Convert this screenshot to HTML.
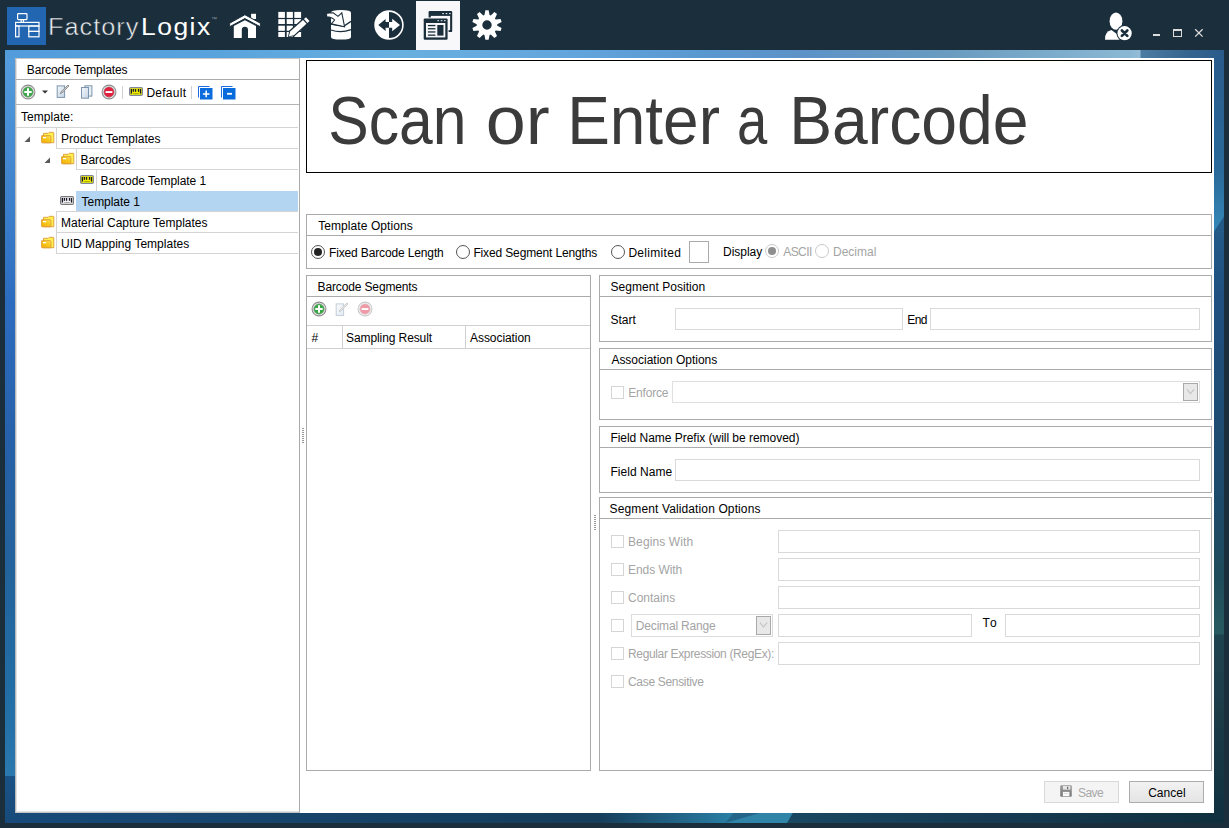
<!DOCTYPE html>
<html><head><meta charset="utf-8">
<style>
*{box-sizing:border-box;margin:0;padding:0}
html,body{width:1229px;height:828px;overflow:hidden;background:#1b2e3c}
body{position:relative;font-family:"Liberation Sans",sans-serif;font-size:12px;color:#000}
.a{position:absolute}
.t{position:absolute;white-space:nowrap;line-height:14px;font-size:12px}
.g{color:#a4a4a4}
.frame{left:5px;top:50px;width:1219px;height:773px;overflow:hidden;
 background:linear-gradient(180deg,#5a9edb 0%,#3b82c4 25%,#2266aa 55%,#2472aa 80%,#1c5a8c 100%)}
.white{left:15px;top:58px;width:1199px;height:755px;background:#fff}
.box{position:absolute;border:1px solid #ababab;background:#fff}
.hd{position:absolute;left:0;right:0;top:0;height:21px;border-bottom:1px solid #ababab}
.tb{position:absolute;border:1px solid #d9d9d9;background:#fff}
.cb{position:absolute;width:13px;height:13px;border:1px solid #d5d5d5;background:#fff}
.rad{position:absolute;width:14px;height:14px;border-radius:50%;border:1px solid #333;background:#fff}
</style></head>
<body>
<!-- frame gradient -->
<div class="a" style="left:5px;top:50px;width:1219px;height:773px;background:#1e5a8c"></div>
<div class="a" style="left:5px;top:50px;width:1219px;height:8px;background:linear-gradient(90deg,#529cdc 0%,#58a2dd 16%,#68b0e0 32.4%,#62a4dc 47%,#5a98d0 57%,#5c92c8 65.2%,#6a9cc0 77.5%,#8ab8d4 92.3%,#94bcd8 93.1%,#4c7ca2 93.2%,#36668f 97%,#2a5a8a 100%)"></div>
<div class="a" style="left:5px;top:58px;width:10px;height:765px;background:linear-gradient(180deg,#559ddd 0%,#2c6cc0 32%,#2660a8 51%,#23639c 67%,#226ea6 84%,#2978ae 93.8%,#1a5285 93.9%,#174a7a 100%)"></div>
<div class="a" style="left:1214px;top:58px;width:10px;height:765px;background:linear-gradient(180deg,#2a5c8c 0%,#2a6a9a 15%,#3488b8 22.6%,#235a88 22.7%,#1f5080 31%,#1e4a68 60%,#1f4c5a 68%,#285a60 75.3%,#1f4450 75.4%,#1c3c48 85%,#10303f 100%)"></div>
<svg class="a" style="left:1214px;top:216px" width="10" height="16" viewBox="0 0 10 16"><path d="M10 0.5 L10 15.6 L0 15.6Z" fill="#235a88"/></svg>
<div class="a" style="left:15px;top:813px;width:1199px;height:10px;background:linear-gradient(90deg,#174a7a 0%,#163d5a 48.5%,#2a80a6 60%,#1a4a66 60.1%,#173c54 80%,#10303f 100%)"></div>
<svg class="a" style="left:680px;top:813px" width="140" height="10" viewBox="0 0 140 10">
  <path d="M53.5 0 L112.8 0 L107 10 L45 10Z" fill="#2f84a8"/>
  <path d="M53.5 0 L79.7 0 L45 10Z" fill="#236689"/>
</svg>
<div class="a white"></div>

<!-- ===== HEADER ===== -->
<div class="a" style="left:7px;top:7px;width:39px;height:38px;background:#2265b0"></div>
<svg class="a" style="left:7px;top:7px" width="39" height="38" viewBox="0 0 39 38">
  <g fill="none" stroke="#fff" stroke-width="1.2">
    <rect x="10.6" y="6.6" width="9.4" height="6" rx="0.8"/>
    <rect x="8.6" y="15.4" width="23.4" height="3.6"/>
    <rect x="8.6" y="19" width="3.4" height="10.8"/>
    <rect x="21.8" y="19" width="10.2" height="5.4"/>
    <rect x="21.8" y="24.4" width="10.2" height="5.4"/>
    <path d="M14.2 12.6v2.8M16.4 12.6v2.8"/>
  </g>
</svg>
<div class="a" style="left:48.4px;top:13px;font-size:23px;line-height:28px;white-space:nowrap;color:#eceef0;letter-spacing:0.9px;transform:scaleX(1.1);transform-origin:0 0;-webkit-text-stroke:0.5px #1b2e3c">Factory</div>
<div class="a" style="left:140.7px;top:13px;font-size:23px;line-height:28px;white-space:nowrap;color:#fff;letter-spacing:1.3px;transform:scaleX(1.15);transform-origin:0 0">Logix</div>
<div class="a" style="left:211px;top:16px;font-size:6px;line-height:6px;white-space:nowrap;color:#8a9aa6">™</div>


<!-- nav icons -->
<svg class="a" style="left:228px;top:10px" width="34" height="30" viewBox="0 0 34 30">
  <path fill="#fff" d="M23.1 3.8 L28 3.8 L28 9 L23.1 9Z"/>
  <path fill="#fff" stroke="#1b2e3c" stroke-width="1" d="M1.6 13.2 L16.9 4.7 L32.4 13.2 L32.4 16.8 L16.9 8.6 L1.6 16.8Z"/>
  <path fill="#fff" d="M5.8 16.1 L16.9 10.3 L28 16.1 L28 28 L20 28 L20 19.8 A3.1 3.1 0 0 0 13.8 19.8 L13.8 28 L5.8 28Z"/>
</svg>
<svg class="a" style="left:276px;top:10px" width="34" height="30" viewBox="0 0 34 30">
  <g fill="#fff"><rect x="2.3" y="1.9" width="6.6" height="6.0"/><rect x="2.3" y="9.1" width="6.6" height="4.9"/><rect x="2.3" y="15.7" width="6.6" height="5.1"/><rect x="2.3" y="22" width="6.6" height="5.0"/><rect x="10.7" y="1.9" width="6.2" height="6.0"/><rect x="10.7" y="9.1" width="6.2" height="4.9"/><rect x="10.7" y="15.7" width="6.2" height="5.1"/><rect x="10.7" y="22" width="6.2" height="5.0"/><rect x="18.3" y="1.9" width="6.8" height="6.0"/><rect x="18.3" y="9.1" width="6.8" height="4.9"/><rect x="18.3" y="15.7" width="6.8" height="5.1"/><rect x="18.3" y="22" width="6.8" height="5.0"/></g>
  <path fill="#1b2e3c" d="M11.91 27.10 L18.52 26.37 L35.25 11.23 L30.02 5.46 L13.30 20.60Z"/>
  <path fill="#fff" d="M12.80 26.30 L17.87 25.21 L30.53 13.75 L27.04 9.90 L14.39 21.36Z"/>
  <path fill="#fff" d="M31.41 12.95 L33.49 11.07 L30.00 7.22 L27.93 9.10Z"/>
</svg>
<svg class="a" style="left:322px;top:6px" width="34" height="36" viewBox="0 0 34 36">
  <path fill="#fff" d="M9 6.6 Q9 4 19 4 Q29 4 29 6.6 L29 31 Q29 33.6 19 33.6 Q9 33.6 9 31Z"/>
  <g fill="none" stroke="#1b2e3c" stroke-width="1.3">
    <path d="M9 18.2 Q16 19.6 22 20 L29 15.4"/>
    <path d="M9 24 Q19 27.6 29 23.6"/>
  </g>
  <path fill="#fff" stroke="#1b2e3c" stroke-width="1.1" stroke-linejoin="miter" d="M4.6 7.2 L11.2 6.8 L16 10.4 L19.8 6.8 L22.6 20.8 L9.2 17.8 L12.6 14 Q10 11.2 4.6 10.8Z"/>
</svg>
<svg class="a" style="left:373px;top:9px" width="33" height="32" viewBox="0 0 33 32">
  <circle cx="16" cy="16" r="14.7" fill="#fff"/>
  <path fill="#1b2e3c" d="M16 2.9 A13.1 13.1 0 0 1 16 29.1Z"/>
  <path fill="#1b2e3c" d="M5.3 16 L12.6 10.1 L12.6 13.1 L16 13.1 L16 18.8 L12.6 18.8 L12.6 21.9Z"/>
  <path fill="#fff" d="M27 16 L19.2 9.8 L19.2 13.1 L16 13.1 L16 18.8 L19.2 18.8 L19.2 22.2Z"/>
</svg>
<div class="a" style="left:416px;top:1px;width:44px;height:49px;background:#f8f8fa"></div>
<svg class="a" style="left:422px;top:10px" width="34" height="32" viewBox="0 0 34 32">
  <rect x="6.6" y="1" width="23.6" height="21.1" rx="1.2" fill="#1b2e3c"/>
  <rect x="8.8" y="5.9" width="19.3" height="14.2" fill="#f8f8fa"/>
  <g fill="#f8f8fa"><rect x="20.3" y="3.1" width="1.6" height="1"/><rect x="23.7" y="3.1" width="1.6" height="1"/><rect x="27" y="3.1" width="1.6" height="1"/></g>
  <rect x="0.7" y="7.4" width="25.9" height="23.3" rx="1.5" fill="#f8f8fa"/>
  <rect x="1.7" y="8.4" width="23.9" height="21.3" rx="1.2" fill="#1b2e3c"/>
  <rect x="4" y="13" width="19.3" height="14.4" fill="#f8f8fa"/>
  <g fill="#f8f8fa"><rect x="15.4" y="10.2" width="1.6" height="1"/><rect x="18.8" y="10.2" width="1.6" height="1"/><rect x="22" y="10.2" width="1.6" height="1"/></g>
  <g fill="#1b2e3c">
    <rect x="5.9" y="14.9" width="7.5" height="1.3"/><rect x="5.9" y="18.1" width="7.5" height="1.3"/>
    <rect x="5.9" y="21.3" width="7.5" height="1.3"/><rect x="5.9" y="24.5" width="7.5" height="1.3"/>
    <rect x="15.3" y="15" width="6.2" height="10.6"/>
  </g>
</svg>
<svg class="a" style="left:471px;top:9px" width="32" height="32" viewBox="0 0 32 32">
  <path fill="#fff" fill-rule="evenodd" d="M13.42 6.03 L14.39 1.19 L17.61 1.19 L18.58 6.03 L19.77 6.42 L23.40 3.07 L26.01 4.96 L23.95 9.45 L24.69 10.47 L29.59 9.89 L30.59 12.95 L26.28 15.37 L26.28 16.63 L30.59 19.05 L29.59 22.11 L24.69 21.53 L23.95 22.55 L26.01 27.04 L23.40 28.93 L19.77 25.58 L18.58 25.97 L17.61 30.81 L14.39 30.81 L13.42 25.97 L12.23 25.58 L8.60 28.93 L5.99 27.04 L8.05 22.55 L7.31 21.53 L2.41 22.11 L1.41 19.05 L5.72 16.63 L5.72 15.37 L1.41 12.95 L2.41 9.89 L7.31 10.47 L8.05 9.45 L5.99 4.96 L8.60 3.07 L12.23 6.42Z M20.7 16 A4.7 4.7 0 1 0 11.3 16 A4.7 4.7 0 1 0 20.7 16Z"/>
</svg>
<!-- user icon -->
<svg class="a" style="left:1102px;top:11px" width="32" height="31" viewBox="0 0 32 31">
  <path fill="#fff" d="M3 28.7 Q2.6 20.6 9.4 19 L15.6 23.6 L17.6 28.7Z"/>
  <ellipse cx="14" cy="10.15" rx="6.4" ry="8.6" fill="#fff"/>
  <circle cx="22.6" cy="22.2" r="8.2" fill="#1b2e3c"/>
  <circle cx="22.6" cy="22.2" r="7.1" fill="#fff"/>
  <path d="M19.9 19.5 L25.3 24.9 M25.3 19.5 L19.9 24.9" stroke="#1b2e3c" stroke-width="2.7" stroke-linecap="round"/>
</svg>
<!-- window controls -->
<div class="a" style="left:1153px;top:34px;width:7px;height:2px;background:#dcdcdc"></div>
<div class="a" style="left:1173px;top:29px;width:9px;height:8px;border:1px solid #dcdcdc;border-top-width:2px"></div>
<svg class="a" style="left:1194px;top:28px" width="10" height="10" viewBox="0 0 10 10"><path d="M1.2 1.2L8.6 8.6M8.6 1.2L1.2 8.6" stroke="#dcdcdc" stroke-width="1.3"/></svg>


<!-- ===== LEFT PANEL ===== -->
<div class="a" style="left:15px;top:58px;width:285px;height:755px;border-left:1px solid #b9b9b9;border-right:1px solid #ababab;border-bottom:1px solid #c4c4c4;border-top:1px solid #c8c8c8;background:#fff;box-shadow:inset 1px 0 0 #e2e2e2, inset 0 -1px 0 #e2e2e2"></div>
<div class="a" style="left:16px;top:79px;width:283px;height:1px;background:#ababab"></div>
<div class="t" style="left:26.80px;top:63.00px;letter-spacing:-0.11px">Barcode Templates</div>
<!-- toolbar -->
<svg class="a" style="left:20px;top:84px" width="16" height="16" viewBox="0 0 16 16">
  <circle cx="8" cy="8" r="6.9" fill="#f6f6f6" stroke="#8c8c8c" stroke-width="1.1"/>
  <circle cx="8" cy="8" r="5.3" fill="#3aa846" stroke="#a0a0a0" stroke-width="0.7"/>
  <path d="M8 4.3v7.4M4.3 8h7.4" stroke="#fff" stroke-width="2"/>
</svg>
<svg class="a" style="left:41px;top:90px" width="8" height="4" viewBox="0 0 8 4"><path d="M1 0.5h6L4 3.5z" fill="#333"/></svg>
<svg class="a" style="left:56px;top:84px" width="14" height="15" viewBox="0 0 14 15">
  <defs><linearGradient id="dg" x1="0" y1="0" x2="1" y2="1"><stop offset="0" stop-color="#f4f8fc"/><stop offset="1" stop-color="#c4d4e4"/></linearGradient></defs>
  <rect x="1.2" y="1.9" width="7.4" height="11.5" fill="url(#dg)" stroke="#7c94ac" stroke-width="1"/>
  <path d="M4.2 9.8 L5 7.8 L12 1 L13 2 L6 8.9Z" fill="#d0d0d0" stroke="#808080" stroke-width="0.8"/>
</svg>
<svg class="a" style="left:80px;top:84px" width="13" height="15" viewBox="0 0 13 15">
  <rect x="4.9" y="1.8" width="7" height="10.3" fill="#e8f0f6" stroke="#7c94ac" stroke-width="1"/>
  <rect x="1.5" y="3.5" width="7" height="10.7" fill="url(#dg)" stroke="#7c94ac" stroke-width="1"/>
</svg>
<svg class="a" style="left:101px;top:84px" width="16" height="16" viewBox="0 0 16 16">
  <circle cx="8" cy="8" r="6.9" fill="#f6f6f6" stroke="#8c8c8c" stroke-width="1.1"/>
  <circle cx="8" cy="8" r="5.3" fill="#e0203e" stroke="#a0a0a0" stroke-width="0.7"/>
  <rect x="4.6" y="7.1" width="6.8" height="1.9" fill="#fff"/>
</svg>
<div class="a" style="left:122px;top:86px;width:1px;height:13px;background:#d0d0d0"></div>
<svg class="a" style="left:129px;top:87px" width="14" height="9" viewBox="0 0 14 9">
  <rect x="0.6" y="0.6" width="12.8" height="7.8" rx="1.2" fill="#f2f000" stroke="#80869c" stroke-width="1.2"/>
  <g fill="#1a1a28"><rect x="1.75" y="2" width="1.3" height="4.6"/><rect x="3.75" y="2" width="1.3" height="2.8"/><rect x="5.9" y="2" width="1.3" height="2.8"/><rect x="8.85" y="2" width="1.3" height="2.8"/><rect x="10.85" y="2" width="1.3" height="4.6"/></g>
  <rect x="4.3" y="6" width="5.4" height="0.9" fill="#a8a800"/>
</svg>
<div class="t" style="left:146.40px;top:86.00px;letter-spacing:0.27px">Default</div>
<div class="a" style="left:191px;top:86px;width:1px;height:13px;background:#d0d0d0"></div>
<svg class="a" style="left:198px;top:86px" width="15" height="14" viewBox="0 0 15 14">
  <path d="M0.5 11.5 V0.5 H11.5" fill="none" stroke="#1a6fe0" stroke-width="1"/>
  <rect x="2" y="2" width="12.5" height="11.5" fill="#0a6cdc"/>
  <path d="M8.2 4.6v6.6M4.9 7.9h6.6" stroke="#fff" stroke-width="1.5"/>
</svg>
<svg class="a" style="left:221px;top:86px" width="15" height="14" viewBox="0 0 15 14">
  <path d="M0.5 11.5 V0.5 H11.5" fill="none" stroke="#1a6fe0" stroke-width="1"/>
  <rect x="2" y="2" width="12.5" height="11.5" fill="#0a6cdc"/>
  <rect x="6" y="6.9" width="5" height="1.8" fill="#fff"/>
</svg>
<div class="a" style="left:16px;top:104px;width:283px;height:1px;background:#b4b4b4"></div>
<div class="t" style="left:21.00px;top:110.00px;letter-spacing:0.04px">Template:</div>
<div class="a" style="left:16px;top:127px;width:282px;height:1px;background:#d4d4d4"></div>
<!-- tree -->
<div class="a" style="left:56px;top:128px;width:242px;height:21px;border-left:1px solid #d4d4d4;border-bottom:1px solid #d4d4d4"></div>
<svg class="a" style="left:24px;top:136px" width="7" height="7" viewBox="0 0 7 7"><path d="M6 0.5 L6 6 L0.5 6Z" fill="#595959"/></svg><svg class="a" style="left:39px;top:130px" width="17" height="16" viewBox="0 0 17 16"><defs><linearGradient id="fold" x1="0" y1="1" x2="1" y2="0"><stop offset="0" stop-color="#f2b000"/><stop offset="0.6" stop-color="#f8c820"/><stop offset="1" stop-color="#ffe860"/></linearGradient></defs>
  <path d="M4.5 3.3 H9.2 L10.2 2.3 H14.1 Q14.8 2.3 14.8 3 V12.7 H4.5Z" fill="#fff04c" stroke="#dc9a3c" stroke-width="0.9"/>
  <path d="M2.6 5.7 H11.1 Q11.9 5.7 11.9 6.4 V12.8 H3.2 Q2.6 12.8 2.6 12.2Z" fill="url(#fold)" stroke="#dc9a3c" stroke-width="0.9"/>
  <rect x="4" y="7" width="3.2" height="1.3" fill="#fff"/>
</svg>
<div class="t" style="left:61.00px;top:132.00px;letter-spacing:0.02px">Product Templates</div>
<div class="a" style="left:76px;top:149px;width:222px;height:21px;border-left:1px solid #d4d4d4;border-bottom:1px solid #d4d4d4"></div>
<svg class="a" style="left:44px;top:157px" width="7" height="7" viewBox="0 0 7 7"><path d="M6 0.5 L6 6 L0.5 6Z" fill="#595959"/></svg><svg class="a" style="left:59px;top:151px" width="17" height="16" viewBox="0 0 17 16">
  <path d="M4.5 3.3 H9.2 L10.2 2.3 H14.1 Q14.8 2.3 14.8 3 V12.7 H4.5Z" fill="#fff04c" stroke="#dc9a3c" stroke-width="0.9"/>
  <path d="M2.6 5.7 H11.1 Q11.9 5.7 11.9 6.4 V12.8 H3.2 Q2.6 12.8 2.6 12.2Z" fill="url(#fold)" stroke="#dc9a3c" stroke-width="0.9"/>
  <rect x="4" y="7" width="3.2" height="1.3" fill="#fff"/>
</svg>
<div class="t" style="left:80.60px;top:153.00px;letter-spacing:-0.09px">Barcodes</div>
<div class="a" style="left:96px;top:170px;width:202px;height:21px;border-left:1px solid #d4d4d4"></div>
<svg class="a" style="left:80px;top:175px" width="14" height="9" viewBox="0 0 14 9">
  <rect x="0.6" y="0.6" width="12.8" height="7.8" rx="1.2" fill="#f2f000" stroke="#80869c" stroke-width="1.2"/>
  <g fill="#1a1a28"><rect x="1.75" y="2" width="1.3" height="4.6"/><rect x="3.75" y="2" width="1.3" height="2.8"/><rect x="5.9" y="2" width="1.3" height="2.8"/><rect x="8.85" y="2" width="1.3" height="2.8"/><rect x="10.85" y="2" width="1.3" height="4.6"/></g>
  <rect x="4.3" y="6" width="5.4" height="0.9" fill="#a8a800"/>
</svg>
<div class="t" style="left:100.60px;top:174.00px;letter-spacing:-0.06px">Barcode Template 1</div>
<div class="a" style="left:76px;top:191px;width:222px;height:20px;background:#b3d5f1"></div>
<svg class="a" style="left:60px;top:196px" width="14" height="9" viewBox="0 0 14 9">
  <rect x="0.6" y="0.6" width="12.8" height="7.8" rx="1.2" fill="#f2f2f2" stroke="#7a7a7a" stroke-width="1.2"/>
  <g fill="#1a1a28"><rect x="1.75" y="2" width="1.3" height="4.6"/><rect x="3.75" y="2" width="1.3" height="2.8"/><rect x="5.9" y="2" width="1.3" height="2.8"/><rect x="8.85" y="2" width="1.3" height="2.8"/><rect x="10.85" y="2" width="1.3" height="4.6"/></g>
  <rect x="4.3" y="6" width="5.4" height="0.9" fill="#a0a0a0"/>
</svg>
<div class="t" style="left:81.60px;top:195.00px;letter-spacing:-0.05px">Template 1</div>
<div class="a" style="left:56px;top:211px;width:242px;height:22px;border-left:1px solid #d4d4d4;border-bottom:1px solid #d4d4d4;border-top:1px solid #d4d4d4"></div>
<svg class="a" style="left:39px;top:214px" width="17" height="16" viewBox="0 0 17 16">
  <path d="M4.5 3.3 H9.2 L10.2 2.3 H14.1 Q14.8 2.3 14.8 3 V12.7 H4.5Z" fill="#fff04c" stroke="#dc9a3c" stroke-width="0.9"/>
  <path d="M2.6 5.7 H11.1 Q11.9 5.7 11.9 6.4 V12.8 H3.2 Q2.6 12.8 2.6 12.2Z" fill="url(#fold)" stroke="#dc9a3c" stroke-width="0.9"/>
  <rect x="4" y="7" width="3.2" height="1.3" fill="#fff"/>
</svg>
<div class="t" style="left:61.00px;top:216.00px;letter-spacing:0.00px">Material Capture Templates</div>
<div class="a" style="left:56px;top:233px;width:242px;height:21px;border-left:1px solid #d4d4d4;border-bottom:1px solid #d4d4d4"></div>
<svg class="a" style="left:39px;top:235px" width="17" height="16" viewBox="0 0 17 16">
  <path d="M4.5 3.3 H9.2 L10.2 2.3 H14.1 Q14.8 2.3 14.8 3 V12.7 H4.5Z" fill="#fff04c" stroke="#dc9a3c" stroke-width="0.9"/>
  <path d="M2.6 5.7 H11.1 Q11.9 5.7 11.9 6.4 V12.8 H3.2 Q2.6 12.8 2.6 12.2Z" fill="url(#fold)" stroke="#dc9a3c" stroke-width="0.9"/>
  <rect x="4" y="7" width="3.2" height="1.3" fill="#fff"/>
</svg>
<div class="t" style="left:61.00px;top:237.00px;letter-spacing:0.02px">UID Mapping Templates</div>
<!-- splitter grip -->
<div class="a" style="left:302px;top:428px;width:2px;height:15px;background:repeating-linear-gradient(180deg,#9a9a9a 0 1px,transparent 1px 2px)"></div>


<!-- ===== MAIN ===== -->
<div class="a" style="left:306px;top:60px;width:906px;height:113px;border:1px solid #000;background:#fff"></div>
<div class="t" style="left:328.10px;top:81.00px;font-size:68px;line-height:78px;color:#3b3b3b;;transform:scaleX(0.892);transform-origin:3px 0">Scan</div>
<div class="t" style="left:485.60px;top:81.00px;font-size:68px;line-height:78px;color:#3b3b3b;;transform:scaleX(1.057);transform-origin:3px 0">or</div>
<div class="t" style="left:566.50px;top:81.00px;font-size:68px;line-height:78px;color:#3b3b3b;;transform:scaleX(0.94);transform-origin:3px 0">Enter</div>
<div class="t" style="left:736.6px;top:81.00px;font-size:68px;line-height:78px;color:#3b3b3b;;letter-spacing:0.00px;transform:scaleX(0.8);transform-origin:0 0">a</div>
<div class="t" style="left:788.60px;top:81.00px;font-size:68px;line-height:78px;color:#3b3b3b;;transform:scaleX(0.945);transform-origin:3px 0">Barcode</div>


<div class="box" style="left:306px;top:214px;width:906px;height:55px"><div class="hd" style="height:21px"></div></div>
<div class="t" style="left:318.20px;top:219.00px;letter-spacing:0.08px">Template Options</div>
<svg class="a" style="left:311px;top:245px" width="14" height="14" viewBox="0 0 14 14"><circle cx="7" cy="7" r="6.5" fill="#fff" stroke="#555" stroke-width="1"/><circle cx="7" cy="7" r="4" fill="#222"/></svg>
<div class="t" style="left:329.00px;top:246.00px;letter-spacing:-0.14px">Fixed Barcode Length</div>
<svg class="a" style="left:456px;top:245px" width="14" height="14" viewBox="0 0 14 14"><circle cx="7" cy="7" r="6.5" fill="#fff" stroke="#555" stroke-width="1"/></svg>
<div class="t" style="left:473.40px;top:246.00px;letter-spacing:-0.14px">Fixed Segment Lengths</div>
<svg class="a" style="left:611px;top:245px" width="14" height="14" viewBox="0 0 14 14"><circle cx="7" cy="7" r="6.5" fill="#fff" stroke="#555" stroke-width="1"/></svg>
<div class="t" style="left:628.40px;top:246.00px;letter-spacing:0.30px">Delimited</div>
<div class="tb" style="left:689px;top:241px;width:20px;height:22px;border-color:#ababab"></div>
<div class="t" style="left:723.00px;top:245.00px;letter-spacing:-0.03px">Display</div>
<svg class="a" style="left:765px;top:244px" width="14" height="14" viewBox="0 0 14 14"><circle cx="7" cy="7" r="6.5" fill="#fff" stroke="#c8c8c8" stroke-width="1"/><circle cx="7" cy="7" r="4" fill="#8e8e8e"/></svg>
<div class="t g" style="left:783.20px;top:245.00px;letter-spacing:-0.55px">ASCII</div>
<svg class="a" style="left:815px;top:244px" width="14" height="14" viewBox="0 0 14 14"><circle cx="7" cy="7" r="6.5" fill="#fff" stroke="#c8c8c8" stroke-width="1"/></svg>
<div class="t g" style="left:833.00px;top:245.00px;letter-spacing:0.00px">Decimal</div>

<div class="box" style="left:306px;top:275px;width:285px;height:496px"><div class="hd" style="height:21px"></div></div>
<div class="t" style="left:317.60px;top:280.00px;letter-spacing:-0.14px">Barcode Segments</div>
<svg class="a" style="left:311px;top:301px" width="16" height="16" viewBox="0 0 16 16">
  <circle cx="8" cy="8" r="6.9" fill="#f6f6f6" stroke="#8c8c8c" stroke-width="1.1"/>
  <circle cx="8" cy="8" r="5.3" fill="#3aa846" stroke="#a0a0a0" stroke-width="0.7"/>
  <path d="M8 4.3v7.4M4.3 8h7.4" stroke="#fff" stroke-width="2"/>
</svg>
<svg class="a" style="left:335px;top:302px" width="14" height="15" viewBox="0 0 14 15" opacity="0.45">
  <defs><linearGradient id="dg" x1="0" y1="0" x2="1" y2="1"><stop offset="0" stop-color="#f4f8fc"/><stop offset="1" stop-color="#c4d4e4"/></linearGradient></defs>
  <rect x="1.2" y="1.9" width="7.4" height="11.5" fill="url(#dg)" stroke="#7c94ac" stroke-width="1"/>
  <path d="M4.2 9.8 L5 7.8 L12 1 L13 2 L6 8.9Z" fill="#d0d0d0" stroke="#808080" stroke-width="0.8"/>
</svg>
<svg class="a" style="left:357px;top:301px" width="16" height="16" viewBox="0 0 16 16" opacity="0.45">
  <circle cx="8" cy="8" r="6.9" fill="#f6f6f6" stroke="#8c8c8c" stroke-width="1.1"/>
  <circle cx="8" cy="8" r="5.3" fill="#e0203e" stroke="#a0a0a0" stroke-width="0.7"/>
  <rect x="4.6" y="7.1" width="6.8" height="1.9" fill="#fff"/>
</svg>
<div class="a" style="left:307px;top:325px;width:283px;height:24px;border-top:1px solid #d0d0d0;border-bottom:1px solid #d0d0d0"></div>
<div class="a" style="left:342px;top:326px;width:1px;height:22px;background:#d0d0d0"></div>
<div class="a" style="left:465px;top:326px;width:1px;height:22px;background:#d0d0d0"></div>
<div class="t" style="left:311.60px;top:331.00px;letter-spacing:0.00px">#</div>
<div class="t" style="left:346.00px;top:331.00px;letter-spacing:-0.09px">Sampling Result</div>
<div class="t" style="left:470.00px;top:331.00px;letter-spacing:-0.06px">Association</div>
<div class="a" style="left:594px;top:515px;width:2px;height:15px;background:repeating-linear-gradient(180deg,#9a9a9a 0 1px,transparent 1px 2px)"></div>

<div class="box" style="left:599px;top:275px;width:613px;height:67px"><div class="hd" style="height:21px"></div></div>
<div class="t" style="left:610.40px;top:280.00px;letter-spacing:0.05px">Segment Position</div>
<div class="t" style="left:610.40px;top:313.00px;letter-spacing:0.03px">Start</div>
<div class="tb" style="left:675px;top:308px;width:228px;height:22px;"></div>
<div class="t" style="left:907.20px;top:313.00px;letter-spacing:-0.50px">End</div>
<div class="tb" style="left:930px;top:308px;width:270px;height:22px;"></div>

<div class="box" style="left:599px;top:348px;width:613px;height:72px"><div class="hd" style="height:21px"></div></div>
<div class="t" style="left:611.40px;top:353.00px;letter-spacing:-0.01px">Association Options</div>
<div class="cb" style="left:611px;top:386px"></div>
<div class="t g" style="left:628.20px;top:386.00px;letter-spacing:-0.17px">Enforce</div>
<div class="tb" style="left:672px;top:381px;width:528px;height:22px;border-color:#e0e0e0"></div>
<div class="a" style="left:1183px;top:383px;width:15px;height:18px;border:1px solid #a9a9a9;background:#e8e8e8"></div>
<svg class="a" style="left:1183px;top:383px" width="15" height="18" viewBox="0 0 15 18"><path d="M3.9 6.4 L7.5 10.6 L11.1 6.4" fill="none" stroke="#c4c4c4" stroke-width="1.2"/></svg>

<div class="box" style="left:599px;top:426px;width:613px;height:67px"><div class="hd" style="height:21px"></div></div>
<div class="t" style="left:610.40px;top:431.00px;letter-spacing:-0.03px">Field Name Prefix (will be removed)</div>
<div class="t" style="left:610.40px;top:465.00px;letter-spacing:0.05px">Field Name</div>
<div class="tb" style="left:675px;top:459px;width:525px;height:22px;"></div>

<div class="box" style="left:599px;top:497px;width:613px;height:274px"><div class="hd" style="height:21px"></div></div>
<div class="t" style="left:609.60px;top:502.00px;letter-spacing:0.12px">Segment Validation Options</div>
<div class="cb" style="left:611px;top:535px"></div><div class="t g" style="left:628.00px;top:535.00px;letter-spacing:0.12px">Begins With</div><div class="tb" style="left:778px;top:530px;width:422px;height:23px;"></div>
<div class="cb" style="left:611px;top:563px"></div><div class="t g" style="left:628.00px;top:563.00px;letter-spacing:-0.06px">Ends With</div><div class="tb" style="left:778px;top:558px;width:422px;height:23px;"></div>
<div class="cb" style="left:611px;top:591px"></div><div class="t g" style="left:628.00px;top:591.00px;letter-spacing:-0.02px">Contains</div><div class="tb" style="left:778px;top:586px;width:422px;height:23px;"></div>
<div class="cb" style="left:611px;top:619px"></div><div class="tb" style="left:631px;top:614px;width:142px;height:23px;border-color:#dcdcdc"></div><div class="t g" style="left:635.80px;top:619.00px;letter-spacing:-0.17px">Decimal Range</div><div class="a" style="left:756px;top:616px;width:15px;height:19px;border:1px solid #a9a9a9;background:#e8e8e8"></div>
<svg class="a" style="left:756px;top:616px" width="15" height="19" viewBox="0 0 15 19"><path d="M3.9 6.6 L7.5 10.8 L11.1 6.6" fill="none" stroke="#c4c4c4" stroke-width="1.2"/></svg>
<div class="tb" style="left:778px;top:614px;width:194px;height:23px;"></div><div class="t" style="left:982.40px;top:616.00px;letter-spacing:1.60px">To</div><div class="tb" style="left:1005px;top:614px;width:195px;height:23px;"></div>
<div class="cb" style="left:611px;top:647px"></div><div class="t g" style="left:628.00px;top:647.00px;letter-spacing:-0.35px">Regular Expression (RegEx):</div><div class="tb" style="left:778px;top:642px;width:422px;height:23px;"></div>
<div class="cb" style="left:611px;top:675px"></div><div class="t g" style="left:628.00px;top:675.00px;letter-spacing:-0.32px">Case Sensitive</div>

<!-- buttons -->
<div class="a" style="left:1044px;top:781px;width:75px;height:22px;border:1px solid #d9d9d9;background:#f4f4f4"></div>
<svg class="a" style="left:1060px;top:785px" width="12" height="12" viewBox="0 0 12 12">
  <defs><linearGradient id="fg" x1="0" y1="0" x2="0" y2="1"><stop offset="0" stop-color="#9a9a9a"/><stop offset="1" stop-color="#7a7a7a"/></linearGradient></defs>
  <rect x="0.2" y="0.2" width="11.6" height="11.6" rx="1.3" fill="url(#fg)"/>
  <rect x="2.9" y="1" width="7.5" height="3.6" fill="#e6e6e6"/><rect x="7" y="1.6" width="1.2" height="2.4" fill="#6a6a6a"/>
  <rect x="2.9" y="6.9" width="6.5" height="4.3" fill="#fafafa"/><rect x="3.8" y="8.4" width="4.6" height="0.6" fill="#cfcfcf"/>
</svg>
<div class="t g" style="left:1078.00px;top:786.00px;color:#a8a8a8;letter-spacing:-0.53px">Save</div>
<div class="a" style="left:1129px;top:781px;width:75px;height:22px;border:1px solid #adadad;background:linear-gradient(180deg,#f2f2f2,#e4e4e4)"></div>
<div class="t" style="left:1148.20px;top:786.00px;letter-spacing:0.00px">Cancel</div>

</body></html>
